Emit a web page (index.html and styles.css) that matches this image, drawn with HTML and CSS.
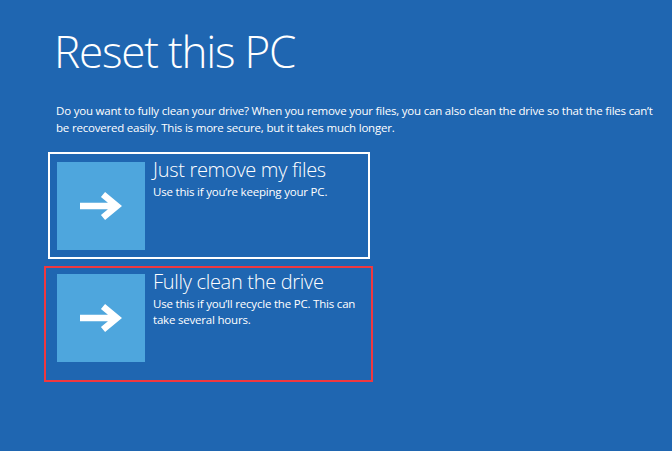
FILE: index.html
```html
<!DOCTYPE html>
<html>
<head>
<meta charset="utf-8">
<link rel="stylesheet" href="styles.css">
</head>
<body>
<main class="page">
  <h1 class="title">Reset this PC</h1>
  <p class="intro">Do you want to fully clean your drive? When you remove your files, you can also clean the drive so that the files can’t be recovered easily. This is more secure, but it takes much longer.</p>
  <div class="options">
    <div class="card card-selected">
      <div class="tile">
        <svg class="arrow" viewBox="0 0 42 28" width="42" height="28"><path d="M0 14 H37 M23 2.5 L37 14 L23 25.5" fill="none" stroke="#fff" stroke-width="6.5" stroke-linejoin="miter"/></svg>
      </div>
      <div class="text">
        <div class="card-title">Just remove my files</div>
        <div class="card-desc">Use this if you’re keeping your PC.</div>
      </div>
    </div>
    <div class="card card-marked">
      <div class="tile">
        <svg class="arrow" viewBox="0 0 42 28" width="42" height="28"><path d="M0 14 H37 M23 2.5 L37 14 L23 25.5" fill="none" stroke="#fff" stroke-width="6.5" stroke-linejoin="miter"/></svg>
      </div>
      <div class="text">
        <div class="card-title">Fully clean the drive</div>
        <div class="card-desc">Use this if you’ll recycle the PC. This can take several hours.</div>
      </div>
    </div>
  </div>
</main>
</body>
</html>
```

FILE: styles.css
```css
html, body {
  margin: 0;
  padding: 0;
}
body {
  background: #1f66b1;
  color: #fff;
  font-family: "Open Sans", "Noto Sans", sans-serif;
  width: 672px;
  height: 451px;
  overflow: hidden;
}
.page {
  padding: 22px 0 0 0;
}
.title {
  margin: 0 0 0 54px;
  font-size: 44px;
  font-weight: 300;
  line-height: 58px;
  letter-spacing: -1.2px;
}
.intro {
  margin: 22px 0 0 56px;
  width: 612px;
  font-size: 11.5px;
  letter-spacing: -0.2px;
  line-height: 17px;
}
.options {
  display: flex;
  flex-direction: column;
  margin-top: 16px;
}
.card {
  display: flex;
  gap: 8px;
  box-sizing: border-box;
}
.card-selected {
  margin-left: 48px;
  width: 322px;
  height: 107px;
  border: 2px solid #fff;
  padding: 8px 0 0 7px;
}
.card-marked {
  margin-left: 44px;
  margin-top: 7px;
  width: 329px;
  height: 116px;
  border: 2px solid #f0383f;
  padding: 6px 0 0 11px;
}
.tile {
  width: 88px;
  height: 88px;
  flex: none;
  background: #4ea6dd;
  display: flex;
  align-items: center;
  justify-content: center;
}
.arrow {
  display: block;
}
.text {
  width: 215px;
  margin-top: -4px;
}
.card-title {
  font-size: 20px;
  font-weight: 300;
  line-height: 24px;
  letter-spacing: -0.3px;
}
.card-desc {
  margin-top: 2px;
  font-size: 11.5px;
  letter-spacing: -0.2px;
  line-height: 16px;
}
```
